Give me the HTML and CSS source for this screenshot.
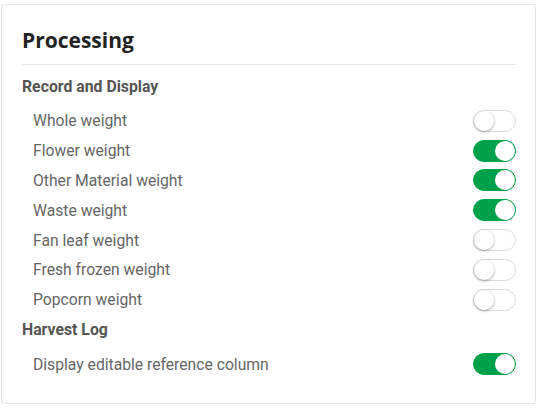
FILE: index.html
```html
<!DOCTYPE html>
<html lang="en">
<head>
    <meta charset="UTF-8">
    <meta name="viewport" content="width=device-width, initial-scale=1.0">
    <title>Processing</title>
    <link rel="stylesheet" href="styles.css">
</head>
<body>
<div class="card">
    <h1 class="card-title">Processing</h1>

    <h2 class="section-title">Record and Display</h2>
    <ul class="settings">
        <li class="setting"><span>Whole weight</span><span class="switch"></span></li>
        <li class="setting"><span>Flower weight</span><span class="switch on"></span></li>
        <li class="setting"><span>Other Material weight</span><span class="switch on"></span></li>
        <li class="setting"><span>Waste weight</span><span class="switch on"></span></li>
        <li class="setting"><span>Fan leaf weight</span><span class="switch"></span></li>
        <li class="setting"><span>Fresh frozen weight</span><span class="switch"></span></li>
        <li class="setting"><span>Popcorn weight</span><span class="switch"></span></li>
    </ul>

    <h2 class="section-title">Harvest Log</h2>
    <ul class="settings settings-last">
        <li class="setting"><span>Display editable reference column</span><span class="switch on"></span></li>
    </ul>
</div>
</body>
</html>
```

FILE: styles.css
```css
body {
    margin: 0;
    padding: 4px 6px 0 1px;
    font-family: Roboto, "Liberation Sans", sans-serif;
    background-color: #fff;
}
.card {
    width: 535px;
    height: 400px;
    box-sizing: border-box;
    border: 1px solid #e3e3e3;
    border-radius: 3px;
    padding: 0 19px 0 20px;
}
.card-title {
    margin: 0;
    padding: 21px 0 10px;
    line-height: 28px;
    font-family: "Open Sans", sans-serif;
    font-size: 21px;
    font-weight: 700;
    color: #222;
    border-bottom: 1px solid #e5e5e5;
}
.section-title {
    margin: 7px 0 0;
    height: 30px;
    line-height: 30px;
    font-size: 15.8px;
    font-weight: 700;
    color: #555;
}
.settings {
    list-style: none;
    margin: 0;
    padding: 4px 0 0 11px;
}
.settings-last {
    padding-top: 5px;
}
.settings + .section-title {
    margin-top: 0;
}
.setting {
    display: flex;
    align-items: center;
    justify-content: space-between;
    height: 29.8px;
    font-size: 15.7px;
    color: #666;
}
.switch {
    position: relative;
    width: 43px;
    height: 22px;
    box-sizing: border-box;
    border: 1px solid #dcdcdc;
    border-radius: 11px;
    background-color: #fff;
}
.switch::after {
    content: "";
    position: absolute;
    top: 0;
    left: 0;
    width: 20px;
    height: 20px;
    border-radius: 50%;
    background-color: #fff;
    box-shadow: 0 1px 3px rgba(0, 0, 0, 0.35);
}
.switch.on {
    background-color: #00a14b;
    border-color: #00a14b;
}
.switch.on::after {
    left: auto;
    right: 0;
    box-shadow: none;
}
```
